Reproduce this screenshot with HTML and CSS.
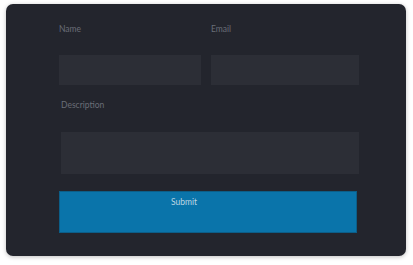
FILE: index.html
```html
<!DOCTYPE html>
<html>
<head>
<meta charset="utf-8">
<link rel="stylesheet" href="styles.css">
</head>
<body>
<div class="card">
  <form class="form">
    <div class="row">
      <div class="field name">
        <label class="label">Name</label>
        <div class="input"></div>
      </div>
      <div class="field email">
        <label class="label">Email</label>
        <div class="input"></div>
      </div>
    </div>
    <div class="field desc">
      <label class="label">Description</label>
      <div class="textarea"></div>
    </div>
    <div class="button">Submit</div>
  </form>
</div>
</body>
</html>
```
FILE: styles.css
```css
html, body {
  margin: 0;
  padding: 0;
  background: #ffffff;
}
body {
  padding: 4px 7px 9px 6px;
  font-family: Lato, "Open Sans", sans-serif;
}
.card {
  width: 400px;
  height: 252px;
  box-sizing: border-box;
  background: #23252d;
  border-radius: 7px;
  box-shadow: 0 1px 4px rgba(0,0,0,0.25);
  padding: 20px 0 0 53px;
}
.form {
  display: flex;
  flex-direction: column;
  width: 300px;
}
.row {
  display: flex;
  gap: 10px;
}
.field {
  display: flex;
  flex-direction: column;
}
.label {
  font-size: 8.5px;
  line-height: 10px;
  color: #696d77;
  height: 10px;
}
.name { width: 142px; }
.email { width: 148px; }
.input {
  margin-top: 21px;
  height: 30px;
  background: #2c2e36;
}
.desc {
  margin-top: 15px;
  padding-left: 2px;
}
.textarea {
  margin-top: 22px;
  height: 42px;
  background: #2c2e36;
}
.button {
  margin-top: 17px;
  width: 298px;
  height: 42px;
  box-sizing: border-box;
  background: #0a74aa;
  border: 1px solid #0c5e88;
  color: #bcd4e4;
  font-size: 8.5px;
  line-height: 10px;
  padding: 5px 0 0 111px;
}
```
